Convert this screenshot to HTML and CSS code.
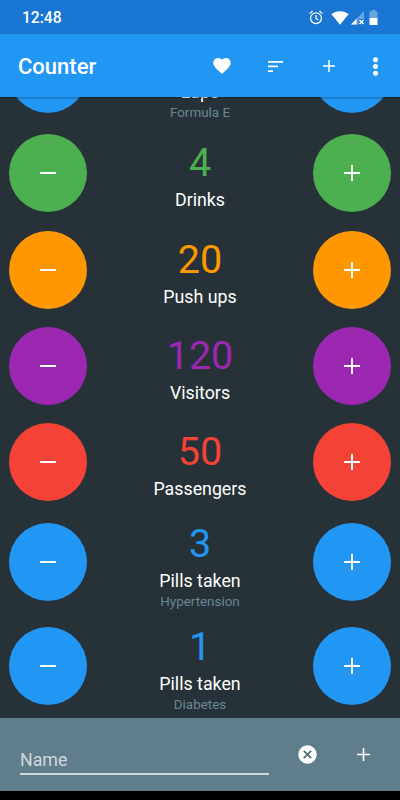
FILE: index.html
```html
<!DOCTYPE html>
<html lang="en">
<head>
    <meta charset="utf-8">
    <title>Counter</title>
    <link rel="stylesheet" href="styles.css">
</head>
<body>
    <!-- shared icons -->
    <svg class="icon-defs" width="0" height="0">
        <symbol id="plus" viewBox="0 0 16 16"><path d="M7 0h2v7h7v2H9v7H7V9H0V7h7z"/></symbol>
        <symbol id="minus" viewBox="0 0 16 16"><path d="M0 7h16v2H0z"/></symbol>
    </svg>

    <div class="status-bar">
        <span class="time">12:48</span>
        <div class="status-icons">
            <svg class="alarm" width="14" height="15" viewBox="0 0 14 15" fill="none" stroke="#fff" stroke-width="1.2">
                <circle cx="7" cy="8.2" r="5.4"/>
                <path d="M7 5v3.4l2.3 1.5M.6 3.6l3-2.6M13.4 3.6l-3-2.6"/>
            </svg>
            <svg class="wifi" width="18" height="14" viewBox="0 0 18 14" fill="#fff">
                <path d="M.3 3.1C5-.8 13-.8 17.7 3.1L9 13.8z"/>
            </svg>
            <svg class="signal" width="14" height="14" viewBox="0 0 14 14">
                <path d="M13 0v8H7.5v5.5H0z" fill="#fff" opacity=".35"/>
                <path d="M5.5 7.8v5.7H0z" fill="#fff"/>
                <path d="M8.5 9l4 4M12.5 9l-4 4" stroke="#fff" stroke-width="1.4"/>
            </svg>
            <svg class="battery" width="9" height="15" viewBox="0 0 9 15" fill="#fff">
                <path d="M2.5 0h4v1.5H8.5V8H.5V1.5h2z" opacity=".35"/>
                <path d="M.5 8h8v7h-8z"/>
            </svg>
        </div>
    </div>

    <header class="toolbar">
        <h1>Counter</h1>
        <div class="actions">
            <svg class="heart" width="18" height="16" viewBox="2 3 20 18.35" fill="#fff">
                <path d="M12 21.35l-1.45-1.32C5.4 15.36 2 12.28 2 8.5 2 5.42 4.42 3 7.5 3c1.74 0 3.41.81 4.5 2.09C13.09 3.81 14.76 3 16.5 3 19.58 3 22 5.42 22 8.5c0 3.78-3.4 6.86-8.55 11.54z"/>
            </svg>
            <svg class="sort" width="15" height="11" viewBox="0 0 15 11" fill="#fff">
                <path d="M0 0h15v1.7H0zM0 4.6h10v1.7H0zM0 9.2h5v1.7H0z"/>
            </svg>
            <svg class="add" width="12" height="12"><use href="#plus"/></svg>
            <svg class="more" width="5" height="19" viewBox="0 0 5 19" fill="#fff">
                <circle cx="2.5" cy="2.8" r="2.5"/>
                <circle cx="2.5" cy="9.5" r="2.5"/>
                <circle cx="2.5" cy="16.2" r="2.5"/>
            </svg>
        </div>
    </header>

    <main class="counters">
        <div class="counter tall blue">
            <button><svg width="16" height="16"><use href="#minus"/></svg></button>
            <div class="info">
                <div class="name">Laps</div>
                <div class="group">Formula E</div>
            </div>
            <button><svg width="16" height="16"><use href="#plus"/></svg></button>
        </div>
        <div class="counter green">
            <button><svg width="16" height="16"><use href="#minus"/></svg></button>
            <div class="info">
                <div class="count">4</div>
                <div class="name">Drinks</div>
            </div>
            <button><svg width="16" height="16"><use href="#plus"/></svg></button>
        </div>
        <div class="counter orange">
            <button><svg width="16" height="16"><use href="#minus"/></svg></button>
            <div class="info">
                <div class="count">20</div>
                <div class="name">Push ups</div>
            </div>
            <button><svg width="16" height="16"><use href="#plus"/></svg></button>
        </div>
        <div class="counter purple">
            <button><svg width="16" height="16"><use href="#minus"/></svg></button>
            <div class="info">
                <div class="count">120</div>
                <div class="name">Visitors</div>
            </div>
            <button><svg width="16" height="16"><use href="#plus"/></svg></button>
        </div>
        <div class="counter red">
            <button><svg width="16" height="16"><use href="#minus"/></svg></button>
            <div class="info">
                <div class="count">50</div>
                <div class="name">Passengers</div>
            </div>
            <button><svg width="16" height="16"><use href="#plus"/></svg></button>
        </div>
        <div class="counter tall blue">
            <button><svg width="16" height="16"><use href="#minus"/></svg></button>
            <div class="info">
                <div class="count">3</div>
                <div class="name">Pills taken</div>
                <div class="group">Hypertension</div>
            </div>
            <button><svg width="16" height="16"><use href="#plus"/></svg></button>
        </div>
        <div class="counter tall blue">
            <button><svg width="16" height="16"><use href="#minus"/></svg></button>
            <div class="info">
                <div class="count">1</div>
                <div class="name">Pills taken</div>
                <div class="group">Diabetes</div>
            </div>
            <button><svg width="16" height="16"><use href="#plus"/></svg></button>
        </div>
    </main>

    <form class="add-form">
        <input type="text" placeholder="Name">
        <svg class="clear" width="19" height="19" viewBox="0 0 19 19">
            <circle cx="9.5" cy="9.5" r="9.2" fill="#fff"/>
            <path d="M5.8 5.8l7.4 7.4M13.2 5.8l-7.4 7.4" stroke="#546e7a" stroke-width="1.8"/>
        </svg>
        <svg class="add" width="13" height="13"><use href="#plus"/></svg>
    </form>
</body>
</html>
```
FILE: styles.css
```css
body {
    margin: 0;
    height: 800px;
    display: flex;
    flex-direction: column;
    overflow: hidden;
    background-color: #000;
    font-family: Roboto, sans-serif;
    color: white;
}
svg {
    display: block;
    flex: none;
}
.icon-defs {
    display: none;
}
use {
    fill: white;
}
.status-bar {
    flex: none;
    height: 34px;
    display: flex;
    justify-content: space-between;
    align-items: center;
    padding: 1px 22px 0 22px;
    box-sizing: border-box;
    background-color: #1976d2;
}
.time {
    font-size: 15.6px;
    font-weight: 500;
}
.status-icons {
    display: flex;
    align-items: center;
}
.wifi {
    margin-left: 8px;
}
.signal {
    margin-left: 2px;
}
.battery {
    margin-left: 4px;
}
.toolbar {
    flex: none;
    height: 63px;
    display: flex;
    justify-content: space-between;
    align-items: center;
    padding: 1px 22px 0 18px;
    box-sizing: border-box;
    background-color: #2196f3;
    box-shadow: 0 1px 2px rgba(0, 0, 0, 0.3);
    z-index: 1;
}
h1 {
    margin: 0;
    font-size: 22px;
    font-weight: 500;
}
.actions {
    display: flex;
    align-items: center;
}
.sort {
    margin-left: 37px;
}
.toolbar .add {
    margin-left: 40px;
}
.more {
    margin-left: 38px;
}
/* the list is scrolled to its end */
.counters {
    flex: none;
    height: 620.8px;
    display: flex;
    flex-direction: column;
    justify-content: flex-end;
    overflow: hidden;
    padding-bottom: 0.6px;
    box-sizing: border-box;
    background-color: #263238;
}
.counter {
    flex: none;
    height: 96.3px;
    display: flex;
    justify-content: space-between;
    align-items: center;
    padding: 0 9px;
    box-sizing: border-box;
    border-top: 1px solid #222d32;
}
.tall {
    height: 103.6px;
}
.tall .info {
    align-self: flex-end;
    padding-bottom: 5px;
}
button {
    width: 78px;
    height: 78px;
    display: flex;
    justify-content: center;
    align-items: center;
    padding: 0;
    border: none;
    border-radius: 50%;
    background-color: currentColor;
}
.blue, .blue button {
    color: #2196f3;
}
.green, .green button {
    color: #4caf50;
}
.orange, .orange button {
    color: #ff9800;
}
.purple, .purple button {
    color: #9c27b0;
}
.red, .red button {
    color: #f44336;
}
.info {
    text-align: center;
}
.count {
    font-size: 39.5px;
    line-height: 53px;
}
.name {
    font-size: 17.8px;
    line-height: 21px;
    color: white;
}
.group {
    font-size: 13.4px;
    line-height: 21px;
    margin-bottom: -3px;
    color: #6b8794;
}
.add-form {
    flex: none;
    height: 73.2px;
    display: flex;
    align-items: center;
    padding: 0 30px 0 20px;
    box-sizing: border-box;
    background-color: #607d8b;
}
input {
    width: 249px;
    height: 34px;
    margin-top: 7px;
    padding: 5px 0 0;
    box-sizing: border-box;
    border: none;
    border-bottom: 2px solid #cfd8dc;
    background: none;
    font-family: Roboto, sans-serif;
    font-size: 17.8px;
    color: white;
}
input::placeholder {
    color: #cfd8dc;
}
.clear {
    margin-left: 29px;
}
.add-form .add {
    margin-left: 40px;
}
```
